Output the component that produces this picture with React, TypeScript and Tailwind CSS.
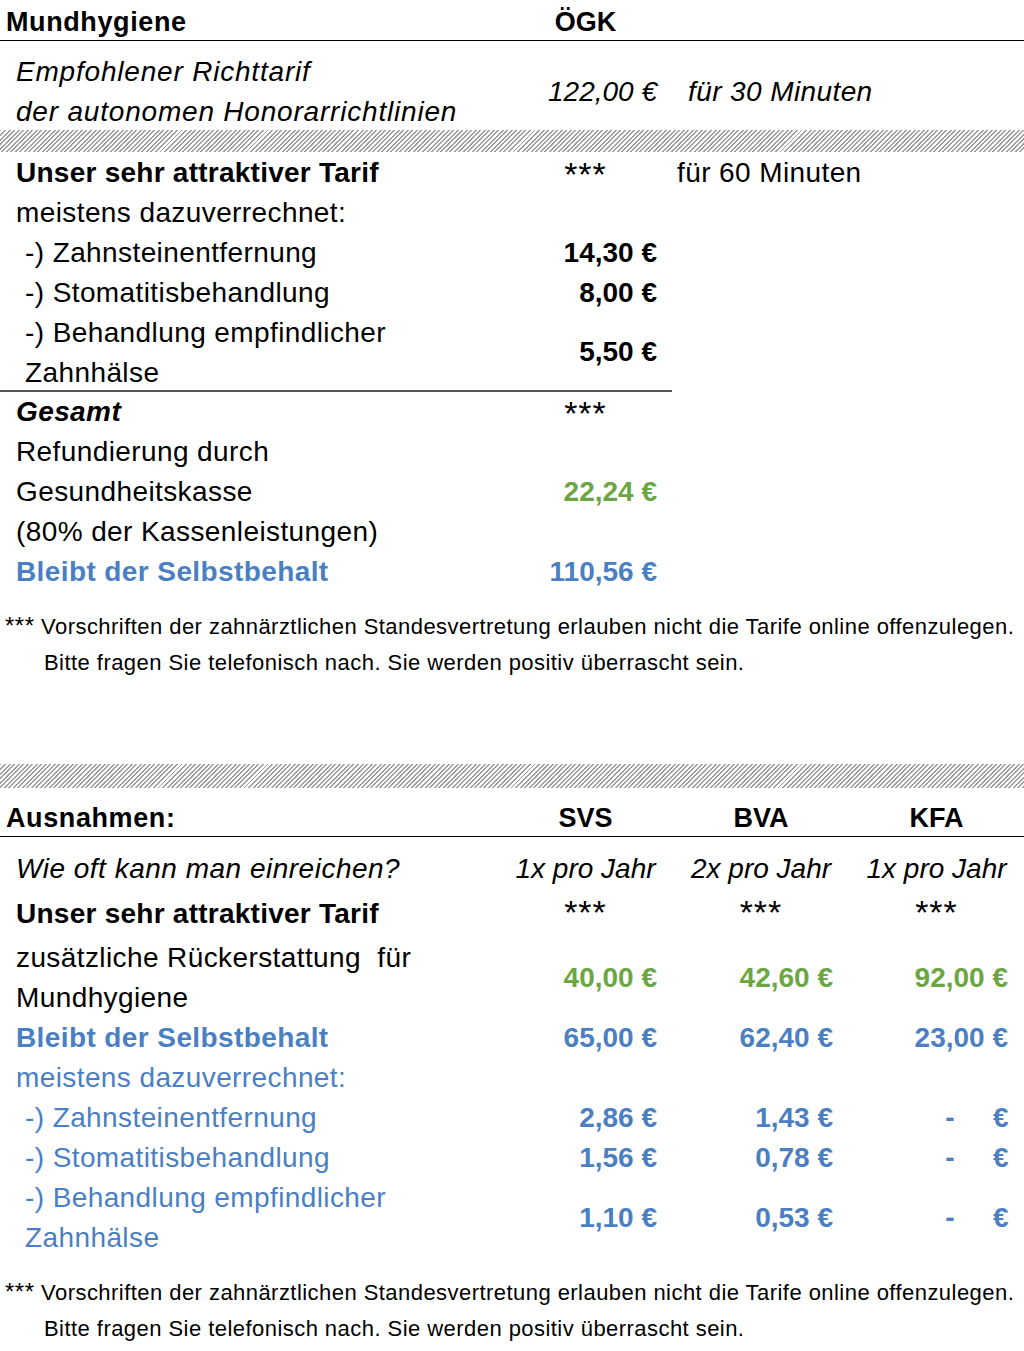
import React from "react";

const GREEN = "text-[#6aa641]";
const BLUE = "text-[#4a7fc4]";

function Band({ className = "" }: { className?: string }) {
  return (
    <div
      className={
        "w-full h-[22px] bg-[repeating-linear-gradient(135deg,#9c9c9c_0px,#9c9c9c_1.4px,#ffffff_1.4px,#ffffff_3.2px)] " +
        className
      }
    />
  );
}

const ROW = "grid grid-cols-[498px_175px_176px_175px]";

function Amt({ children, className = "" }: { children: React.ReactNode; className?: string }) {
  return <div className={"text-right pr-[16px] font-bold tracking-normal " + className}>{children}</div>;
}

function Stars() {
  return <div className="text-center text-[34px] leading-[30px] self-start pt-[6px] tracking-[1px]">***</div>;
}

function Dash({ className = "" }: { className?: string }) {
  return (
    <div className={"flex justify-end pr-[15px] font-bold " + className}>
      <span>-</span>
      <span className="ml-[38px]">€</span>
    </div>
  );
}

function Footnote() {
  return (
    <div className="text-[22px] leading-[36px] tracking-[0.45px]">
      <div className="pl-[5px]">
        <span className="text-[24px] tracking-[0.5px]">***</span> Vorschriften der zahnärztlichen Standesvertretung erlauben nicht die Tarife online offenzulegen.
      </div>
      <div className="pl-[44px]">Bitte fragen Sie telefonisch nach. Sie werden positiv überrascht sein.</div>
    </div>
  );
}

export default function App() {
  return (
    <div className="w-[1024px] min-h-[1351px] bg-white text-black font-['Liberation_Sans',Arial,sans-serif] text-[28px] leading-[40px] tracking-[0.4px]">
      {/* Section 1 header */}
      <div className={ROW + " h-[41px] items-center border-b border-black text-[27px] font-bold pt-[2px]"}>
        <div className="pl-[6px] tracking-[0.6px]">Mundhygiene</div>
        <div className="text-center tracking-normal">ÖGK</div>
      </div>

      <div className={ROW + " mt-[11px] h-[80px] items-center italic"}>
        <div className="pl-[16px] tracking-[0.8px]">
          <div>Empfohlener Richttarif</div>
          <div>der autonomen Honorarrichtlinien</div>
        </div>
        <div className="text-right pr-[16px] tracking-normal">122,00 €</div>
        <div className="col-span-2 pl-[15px]">für 30 Minuten</div>
      </div>

      <Band className="-mt-[2px]" />

      <div className="pt-px">
        <div className={ROW + " h-[40px]"}>
          <div className="pl-[16px] font-bold tracking-[0.25px]">Unser sehr attraktiver Tarif</div>
          <Stars />
          <div className="col-span-2 pl-[4px]">für 60 Minuten</div>
        </div>
        <div className={ROW + " h-[40px]"}>
          <div className="pl-[16px]">meistens dazuverrechnet:</div>
        </div>
        <div className={ROW + " h-[40px]"}>
          <div className="pl-[25px]">-) Zahnsteinentfernung</div>
          <Amt>14,30 €</Amt>
        </div>
        <div className={ROW + " h-[40px]"}>
          <div className="pl-[25px]">-) Stomatitisbehandlung</div>
          <Amt>8,00 €</Amt>
        </div>
        <div className={ROW + " h-[77px] items-center"}>
          <div className="pl-[25px] self-start">
            <div>-) Behandlung empfindlicher</div>
            <div>Zahnhälse</div>
          </div>
          <Amt className="-mt-[3px]">5,50 €</Amt>
        </div>
        <div className="w-[672px] h-[2px] bg-[#555555]" />
        <div className={ROW + " h-[40px]"}>
          <div className="pl-[16px] font-bold italic">Gesamt</div>
          <Stars />
        </div>
        <div className={ROW + " h-[40px]"}>
          <div className="pl-[16px]">Refundierung durch</div>
        </div>
        <div className={ROW + " h-[40px]"}>
          <div className="pl-[16px]">Gesundheitskasse</div>
          <Amt className={GREEN}>22,24 €</Amt>
        </div>
        <div className={ROW + " h-[40px]"}>
          <div className="pl-[16px]">(80% der Kassenleistungen)</div>
        </div>
        <div className={ROW + " h-[40px] " + BLUE}>
          <div className="pl-[16px] font-bold">Bleibt der Selbstbehalt</div>
          <Amt>110,56 €</Amt>
        </div>
      </div>

      <div className="mt-[16px]">
        <Footnote />
      </div>

      <Band className="mt-[83px] h-[24px]" />

      {/* Section 2 header */}
      <div className={ROW + " h-[49px] items-end border-b border-black text-[27px] font-bold leading-[36px]"}>
        <div className="pl-[6px] tracking-[0.6px]">Ausnahmen:</div>
        <div className="text-center tracking-normal">SVS</div>
        <div className="text-center tracking-normal">BVA</div>
        <div className="text-center tracking-normal">KFA</div>
      </div>

      <div className="pt-[9px]">
        <div className={ROW + " h-[45px] items-center italic"}>
          <div className="pl-[16px] tracking-[0.5px]">Wie oft kann man einreichen?</div>
          <div className="text-center tracking-normal">1x pro Jahr</div>
          <div className="text-center tracking-normal">2x pro Jahr</div>
          <div className="text-center tracking-normal">1x pro Jahr</div>
        </div>
        <div className={ROW + " h-[45px] items-center"}>
          <div className="pl-[16px] font-bold tracking-[0.25px]">Unser sehr attraktiver Tarif</div>
          <Stars />
          <Stars />
          <Stars />
        </div>
        <div className={ROW + " mt-[2px] h-[80px] items-center"}>
          <div className="pl-[16px]">
            <div className="whitespace-pre">zusätzliche Rückerstattung  für</div>
            <div>Mundhygiene</div>
          </div>
          <Amt className={GREEN}>40,00 €</Amt>
          <Amt className={GREEN}>42,60 €</Amt>
          <Amt className={GREEN + " pr-[15px]"}>92,00 €</Amt>
        </div>
        <div className={ROW + " h-[40px] " + BLUE}>
          <div className="pl-[16px] font-bold">Bleibt der Selbstbehalt</div>
          <Amt>65,00 €</Amt>
          <Amt>62,40 €</Amt>
          <Amt className="pr-[15px]">23,00 €</Amt>
        </div>
        <div className={ROW + " h-[40px] " + BLUE}>
          <div className="pl-[16px]">meistens dazuverrechnet:</div>
        </div>
        <div className={ROW + " h-[40px] " + BLUE}>
          <div className="pl-[25px]">-) Zahnsteinentfernung</div>
          <Amt>2,86 €</Amt>
          <Amt>1,43 €</Amt>
          <Dash />
        </div>
        <div className={ROW + " h-[40px] " + BLUE}>
          <div className="pl-[25px]">-) Stomatitisbehandlung</div>
          <Amt>1,56 €</Amt>
          <Amt>0,78 €</Amt>
          <Dash />
        </div>
        <div className={ROW + " h-[80px] items-center " + BLUE}>
          <div className="pl-[25px]">
            <div>-) Behandlung empfindlicher</div>
            <div>Zahnhälse</div>
          </div>
          <Amt>1,10 €</Amt>
          <Amt>0,53 €</Amt>
          <Dash />
        </div>
      </div>

      <div className="mt-[16px] pb-[5px]">
        <Footnote />
      </div>
    </div>
  );
}
